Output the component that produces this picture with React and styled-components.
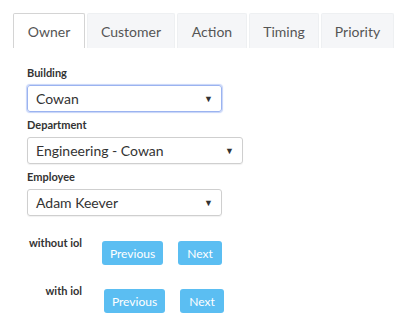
import React from "react";
import styled, { createGlobalStyle } from "styled-components";

const Global = createGlobalStyle`
  body {
    margin: 0;
    background: #fff;
    font-family: Lato, "Noto Sans", sans-serif;
    color: #333;
  }
`;

const Page = styled.div`
  padding: 13px 0 0 13px;
`;

const Tabs = styled.div`
  display: flex;
  gap: 2px;
`;

const Tab = styled.div`
  box-sizing: border-box;
  width: ${(p) => p.w}px;
  height: 35px;
  display: flex;
  align-items: center;
  justify-content: center;
  font-size: 14px;
  color: #555;
  background: ${(p) => (p.active ? "#fff" : "#f5f6f8")};
  border: 1px solid ${(p) => (p.active ? "#d4d4d4" : "#eef0f2")};
  border-bottom: none;
  border-radius: 2px 2px 0 0;
`;

const Form = styled.div`
  padding: 18px 0 0 14px;
  display: flex;
  flex-direction: column;
`;

const Label = styled.div`
  font-size: 11px;
  font-weight: 700;
  color: #333;
  height: 14px;
  margin-bottom: 5px;
`;

const Select = styled.div`
  box-sizing: border-box;
  width: ${(p) => p.w}px;
  height: 27px;
  display: flex;
  align-items: center;
  justify-content: space-between;
  padding: 0 8px 0 8px;
  font-size: 14px;
  color: #333;
  border: 1px solid ${(p) => (p.focus ? "#9bb3f0" : "#cfcfcf")};
  border-radius: 3px;
  box-shadow: ${(p) => (p.focus ? "0 0 1px 1px #c6d4f8" : "0 1px 1px rgba(0,0,0,0.06)")};
  margin-bottom: 6px;
`;

const Arrow = styled.span`
  font-size: 9px;
  color: #333;
`;

const Row = styled.div`
  display: flex;
  align-items: flex-start;
  margin-top: ${(p) => p.mt}px;
`;

const RowLabel = styled.div`
  width: 55px;
  text-align: right;
  font-size: 11px;
  font-weight: 700;
  color: #333;
  margin-top: -5px;
`;

const Buttons = styled.div`
  display: flex;
  gap: 15px;
  margin-left: ${(p) => p.ml}px;
`;

const Button = styled.div`
  box-sizing: border-box;
  width: ${(p) => p.w}px;
  height: 24px;
  background: #5bbef2;
  color: #fff;
  font-size: 12px;
  border-radius: 3px;
  display: flex;
  align-items: center;
  justify-content: center;
`;

const tabs = [
  { t: "Owner", w: 72 },
  { t: "Customer", w: 88 },
  { t: "Action", w: 70 },
  { t: "Timing", w: 70 },
  { t: "Priority", w: 73 },
];

export default function App() {
  return (
    <Page>
      <Global />
      <Tabs>
        {tabs.map((t, i) => (
          <Tab key={t.t} w={t.w} active={i === 0}>
            {t.t}
          </Tab>
        ))}
      </Tabs>
      <Form>
        <Label>Building</Label>
        <Select w={195} focus>
          Cowan <Arrow>▼</Arrow>
        </Select>
        <Label>Department</Label>
        <Select w={216}>
          Engineering - Cowan <Arrow>▼</Arrow>
        </Select>
        <Label>Employee</Label>
        <Select w={195}>
          Adam Keever <Arrow>▼</Arrow>
        </Select>
        <Row mt={19}>
          <RowLabel>without iol</RowLabel>
          <Buttons ml={20}>
            <Button w={61}>Previous</Button>
            <Button w={44}>Next</Button>
          </Buttons>
        </Row>
        <Row mt={24}>
          <RowLabel>with iol</RowLabel>
          <Buttons ml={22}>
            <Button w={61}>Previous</Button>
            <Button w={44}>Next</Button>
          </Buttons>
        </Row>
      </Form>
    </Page>
  );
}
